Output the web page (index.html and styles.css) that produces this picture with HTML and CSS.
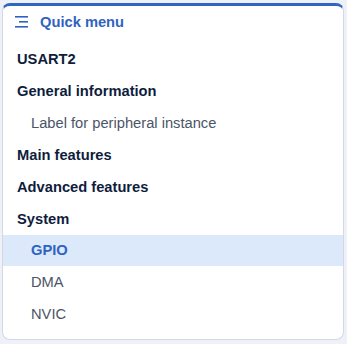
FILE: index.html
```html
<!DOCTYPE html>
<html>
<head>
<meta charset="utf-8">
<link rel="stylesheet" href="styles.css">
</head>
<body>
<nav class="card">
  <div class="header">
    <svg class="icon" width="14" height="13" viewBox="0 0 14 13">
      <rect x="0" y="1" width="13" height="1.6" fill="#2f63c1"/>
      <rect x="4" y="6" width="9" height="1.6" fill="#2f63c1"/>
      <rect x="0" y="11" width="13" height="1.6" fill="#2f63c1"/>
    </svg>
    <span class="title">Quick menu</span>
  </div>
  <ul class="list">
    <li class="item top">USART2</li>
    <li class="item top">General information</li>
    <li class="item sub">Label for peripheral instance</li>
    <li class="item top">Main features</li>
    <li class="item top">Advanced features</li>
    <li class="item top">System</li>
    <li class="item sub active">GPIO</li>
    <li class="item sub">DMA</li>
    <li class="item sub">NVIC</li>
  </ul>
</nav>
</body>
</html>
```

FILE: styles.css
```css
html, body {
  margin: 0;
  padding: 0;
}
body {
  background: #eef1f7;
  padding: 3px 3px 4px 2px;
  font-family: "Liberation Sans", Arial, sans-serif;
  font-size: 14.7px;
}
.card {
  box-sizing: border-box;
  height: 337px;
  background: #ffffff;
  border: 1px solid #d3d8e3;
  border-top: 3px solid #2f66c1;
  border-radius: 8px;
  overflow: hidden;
}
.header {
  height: 32px;
  display: flex;
  align-items: center;
  padding-left: 12px;
  gap: 11px;
}
.icon {
  display: block;
  margin-top: -1px;
}
.title {
  font-weight: 700;
  color: #2f63c1;
  font-size: 14.7px;
}
.list {
  list-style: none;
  margin: 5.5px 0 0 0;
  padding: 0;
}
.item {
  height: 31.85px;
  display: flex;
  align-items: center;
  padding-left: 14px;
}
.top {
  font-weight: 700;
  color: #0f1d3d;
}
.sub {
  padding-left: 28px;
  color: #4b5568;
}
.active {
  background: #dbe9fb;
  color: #2f63c1;
  font-weight: 700;
}
```
